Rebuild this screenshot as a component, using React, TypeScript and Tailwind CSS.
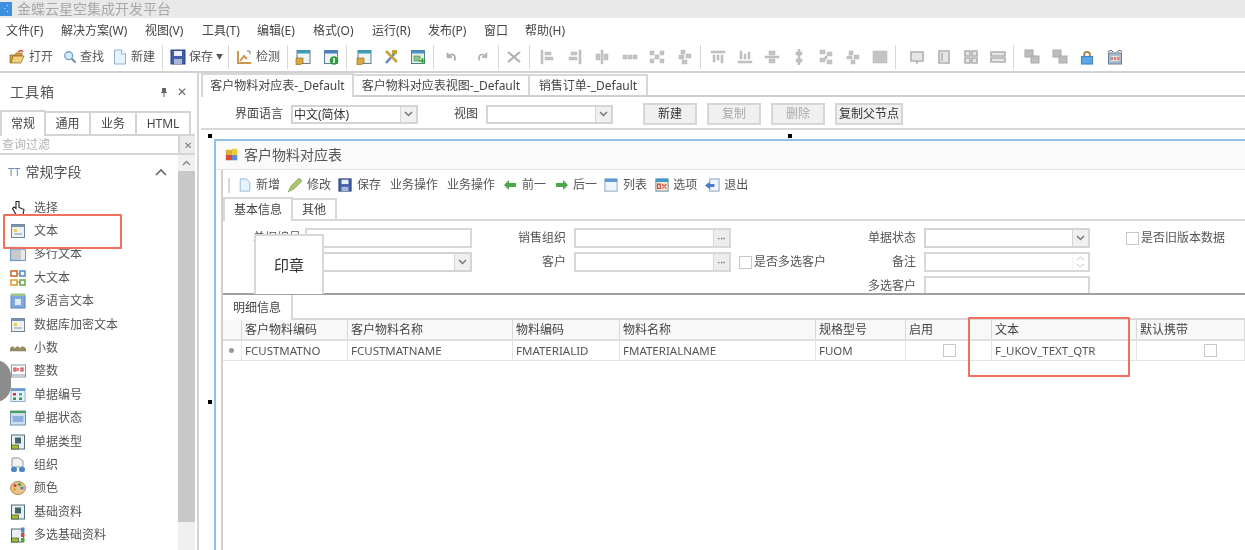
import type { ReactNode } from "react";

const menus = [
  { label: "文件(F)", w: "w-[55px]" },
  { label: "解决方案(W)", w: "w-[84px]" },
  { label: "视图(V)", w: "w-[57px]" },
  { label: "工具(T)", w: "w-[55px]" },
  { label: "编辑(E)", w: "w-[56px]" },
  { label: "格式(O)", w: "w-[59px]" },
  { label: "运行(R)", w: "w-[56px]" },
  { label: "发布(P)", w: "w-[56px]" },
  { label: "窗口", w: "w-[41px]" },
  { label: "帮助(H)", w: "w-[60px]" },
];

function Svg({ children, size = 16 }: { children: ReactNode; size?: number }) {
  return (
    <svg width={size} height={size} viewBox="0 0 16 16" className="shrink-0">
      {children}
    </svg>
  );
}

const FolderIcon = () => (
  <Svg>
    <path d="M1 6h5l1-2h6v3H4L2 14H1z" fill="#d9a441" stroke="#8a6420" strokeWidth=".7" />
    <path d="M4 7h11l-3 7H2z" fill="#f2cf7a" stroke="#8a6420" strokeWidth=".7" />
    <path d="M9 3c2-2 4-2 5 0" fill="none" stroke="#d8403a" strokeWidth="1.4" />
  </Svg>
);
const PageIcon = () => (
  <Svg>
    <path d="M2.5 1h7l4 4v10h-11z" fill="#e6f2fc" stroke="#8db4d6" />
    <path d="M9.5 1v4h4" fill="#fff" stroke="#8db4d6" />
  </Svg>
);
const SaveIcon = () => (
  <Svg>
    <rect x="1" y="1" width="14" height="14" fill="#3f5ea8" stroke="#2c4280" />
    <rect x="4" y="2" width="8" height="5" fill="#e8eefa" />
    <rect x="4" y="10" width="8" height="5" fill="#a9b6d6" />
  </Svg>
);
const CheckChart = () => (
  <Svg>
    <path d="M2 2v12h13" fill="none" stroke="#c9974d" strokeWidth="2" />
    <path d="M4 12l4-5 3 3" fill="none" stroke="#c9974d" strokeWidth="2" />
    <path d="M11 2h3v3" fill="none" stroke="#777" strokeWidth="1" />
  </Svg>
);
const WindowFlag = () => (
  <Svg>
    <rect x="2" y="1.5" width="13" height="13" fill="#eef3f7" stroke="#607f8f" />
    <rect x="2" y="1.5" width="13" height="3" fill="#3a9fb8" />
    <path d="M1 9h7v5l-3 2H1z" fill="#d8a93f" stroke="#7f6120" strokeWidth=".6" />
  </Svg>
);
const WindowInfo = () => (
  <Svg>
    <rect x="1.5" y="1.5" width="13" height="13" fill="#eef3f7" stroke="#607f8f" />
    <rect x="1.5" y="1.5" width="13" height="3" fill="#4a7fc4" />
    <circle cx="11" cy="11.5" r="4.3" fill="#2f9e3c" />
    <rect x="10.3" y="9" width="1.5" height="5" fill="#fff" />
  </Svg>
);
const ToolsIcon = () => (
  <Svg>
    <path d="M3 14L12 4" stroke="#5d86b0" strokeWidth="2.5" />
    <path d="M3 2l11 11" stroke="#c9a13c" strokeWidth="2.5" />
    <path d="M9 1h5v4H9z" fill="#c9a13c" />
  </Svg>
);
const WindowPlus = () => (
  <Svg>
    <rect x="1.5" y="1.5" width="13" height="13" fill="#e6f1e6" stroke="#4a7f86" />
    <rect x="1.5" y="1.5" width="13" height="3" fill="#4a90c4" />
    <rect x="4" y="7" width="6" height="5" fill="#8fc48f" stroke="#3d8a3d" strokeWidth=".6" />
    <path d="M12.5 9v6M9.5 12h6" stroke="#3da33d" strokeWidth="1.6" />
  </Svg>
);
const Undo = () => (
  <Svg size={14}>
    <path d="M3 3v5h5M3.5 7.5C7 3 13 5 11 12" fill="none" stroke="#a8a8a8" strokeWidth="2" />
  </Svg>
);
const Redo = () => (
  <Svg size={14}>
    <path d="M13 3v5H8M12.5 7.5C9 3 3 5 5 12" fill="none" stroke="#b4b4b4" strokeWidth="2" />
  </Svg>
);
const CutX = () => (
  <Svg>
    <path d="M2 3l12 10M14 3L2 13" stroke="#b0b0b0" strokeWidth="2.2" />
  </Svg>
);

const grayShapes = [
  "M2 1h2v14H2zM6 3h6v3H6zM6 8h8v3H6z",
  "M12 1h2v14h-2zM4 3h6v3H4zM2 8h8v3H2z",
  "M7 1h2v14H7zM2 5h4v6H2zM10 5h4v6h-4z",
  "M1 6h4v4H1zM6 6h4v4H6zM11 6h4v4h-4z",
  "M1 2h4v4H1zM11 2h4v4h-4zM6 6h4v4H6zM1 10h4v4H1zM11 10h4v4h-4z",
  "M4 1h4v4H4zM9 5h5v4H9zM2 6h5v4H2zM5 11h5v4H5z",
  "M1 2h14v2H1zM3 6h2v7H3zM7 6h2v5H7zM11 6h2v8h-2z",
  "M3 2h2v8H3zM7 5h2v5H7zM11 3h2v7h-2zM1 12h14v2H1z",
  "M1 7h14v2H1zM5 2h6v4H5zM5 10h6v4H5z",
  "M7 0h2v16H7zM5 3h6v3H5zM5 10h6v3H5z",
  "M2 1h5v4H2zM9 3h5v4H9zM2 9h5v4H2zM9 11h5v4H9zM7 7h2v3H7z",
  "M4 2h4v4H4zM9 6h5v4H9zM2 7h5v3H2zM6 11h4v4H6z",
  "M1 2h14v12H1z",
];
const GrayIcon = ({ i }: { i: number }) => (
  <Svg>
    <path d={grayShapes[i]} fill="#c4c4c4" stroke="#b4b4b4" strokeWidth=".5" />
  </Svg>
);
const Outline = ({ d }: { d: string }) => (
  <Svg>
    <path d={d} fill="#e6e6e6" stroke="#b0b0b0" strokeWidth="1.6" />
  </Svg>
);
const Stack = () => (
  <Svg>
    <rect x="1" y="1" width="8" height="7" fill="#bdbdbd" stroke="#aaa" />
    <rect x="7" y="7" width="8" height="7" fill="#bdbdbd" stroke="#aaa" />
  </Svg>
);
const Lock = () => (
  <Svg size={15}>
    <path d="M4.5 8V5a3 3 0 016 0v3" fill="none" stroke="#a5803f" strokeWidth="2" />
    <rect x="1.5" y="7" width="12" height="8" fill="#5aa6e6" stroke="#3b7db8" />
  </Svg>
);
const Clock = () => (
  <Svg>
    <rect x="1.5" y="4" width="13" height="11" fill="#a8bcd0" stroke="#6b7f92" />
    <path d="M1 3c2-2 4-2 5 0M10 3c2-2 4-2 5 0" fill="none" stroke="#444" strokeWidth="1" />
    <rect x="4" y="7" width="8" height="5" fill="#e8e0e0" />
    <path d="M5 8v3M8 8v3M11 8v3" stroke="#d33" strokeWidth="1.2" />
  </Svg>
);

const Sep = ({ className = "" }: { className?: string }) => (
  <span className={`mx-[7px] h-[24px] w-px shrink-0 bg-[#d6d6d6] ${className}`} />
);

const TextWin = () => (
  <Svg>
    <rect x="1.5" y="1.5" width="13" height="13" fill="#eef1f4" stroke="#6f8597" />
    <rect x="1.5" y="1.5" width="13" height="2.5" fill="#7b93a8" />
    <rect x="4" y="6" width="3" height="3" fill="#f0cc55" />
    <path d="M4 11h8" stroke="#8a9aa8" />
  </Svg>
);

const listIcons: ReactNode[] = [
  <Svg key="hand">
    <path d="M6 1.5v7L4 7 2.5 8.5 6 14.5h7l1-5-5-2V1.5z" fill="#fff" stroke="#222" strokeWidth="1.1" />
  </Svg>,
  <TextWin key="text" />,
  <Svg key="multi">
    <rect x="0.5" y="1.5" width="15" height="13" fill="#c9c9c9" stroke="#6c9bd0" strokeWidth="1.2" />
    <rect x="0.5" y="1.5" width="15" height="2.5" fill="#8eb4de" />
    <rect x="11" y="4" width="4" height="10" fill="#e8e8e8" />
  </Svg>,
  <Svg key="big">
    <rect x="1" y="1" width="6" height="5" fill="none" stroke="#d0692b" strokeWidth="1.6" />
    <rect x="1" y="10" width="6" height="5" fill="none" stroke="#e0a030" strokeWidth="1.6" />
    <rect x="10" y="1" width="5" height="5" fill="none" stroke="#5a8ec4" strokeWidth="1.6" />
    <rect x="10" y="10" width="5" height="5" fill="none" stroke="#6aa84f" strokeWidth="1.6" />
    <path d="M7 4h3M7 12h3" stroke="#888" />
  </Svg>,
  <Svg key="lang">
    <rect x="1" y="2" width="14" height="13" fill="#7fa8dc" stroke="#5b85ba" />
    <rect x="1" y="0.5" width="14" height="2.5" fill="#9dc58a" />
    <rect x="5" y="6" width="6" height="6" fill="#dfeafa" />
  </Svg>,
  <TextWin key="db" />,
  <Svg key="dec">
    <path d="M0 9c1-3 4-3 5 0 1-3 4-3 5 0 1-3 4-3 6 0v2H0z" fill="#9c8c5a" stroke="#777" strokeWidth=".5" />
  </Svg>,
  <Svg key="int">
    <rect x="1.5" y="2" width="14" height="12" fill="#fff" stroke="#8899aa" />
    <path d="M4 5h2v3H4zM8 5v3M11 5h2v3h-2z" fill="none" stroke="#c93a3a" strokeWidth="1.2" />
    <path d="M2 12h13" stroke="#8899aa" />
  </Svg>,
  <Svg key="no">
    <rect x="1" y="1.5" width="14" height="13" fill="#e6effa" stroke="#8eb0d6" />
    <rect x="1" y="1.5" width="14" height="2.5" fill="#6c9bd0" />
    <rect x="3" y="6" width="3" height="2.5" fill="#d33" />
    <rect x="9" y="6" width="3" height="2.5" fill="#3b8" />
    <rect x="3" y="10.5" width="3" height="2.5" fill="#3a9c3a" />
    <rect x="9" y="10.5" width="3" height="2.5" fill="#3a9c3a" />
  </Svg>,
  <Svg key="status">
    <rect x="0.5" y="1" width="15" height="14" fill="#cfdff2" stroke="#7b93a8" />
    <rect x="0.5" y="1" width="15" height="2" fill="#3ea25a" />
    <rect x="2.5" y="6" width="11" height="6" fill="#8eb0de" />
  </Svg>,
  <Svg key="type">
    <rect x="1.5" y="1" width="13" height="14" fill="#e8eef2" stroke="#50707f" />
    <rect x="5" y="3.5" width="6" height="6" fill="#466" />
    <rect x="1.5" y="11" width="7" height="4" fill="#9ec22e" stroke="#333" strokeWidth=".6" />
  </Svg>,
  <Svg key="org">
    <path d="M2 1h7l4 3v6H2z" fill="#f2f2f2" stroke="#8a9aa8" />
    <rect x="1" y="10" width="6" height="5" rx="2" fill="#4a86c8" />
    <rect x="9" y="10" width="6" height="5" rx="2" fill="#4a86c8" />
  </Svg>,
  <Svg key="color">
    <ellipse cx="8" cy="8" rx="7.5" ry="6.5" fill="#e8c48a" stroke="#b08a50" />
    <circle cx="5" cy="5.5" r="1.6" fill="#d83a3a" />
    <circle cx="9.5" cy="4.5" r="1.6" fill="#3b9c3b" />
    <circle cx="12" cy="8" r="1.6" fill="#3b7bd8" />
    <circle cx="4.5" cy="9.5" r="1.6" fill="#e8a030" />
  </Svg>,
  <Svg key="base">
    <rect x="1.5" y="1" width="13" height="14" fill="#e8eef2" stroke="#50707f" />
    <rect x="5" y="3.5" width="6" height="6" fill="#466" />
    <rect x="1.5" y="11" width="7" height="4" fill="#9ec22e" stroke="#333" strokeWidth=".6" />
  </Svg>,
  <Svg key="mbase">
    <rect x="1.5" y="2" width="12" height="13" fill="#e8eef2" stroke="#50707f" />
    <rect x="1.5" y="11" width="7" height="4" fill="#9ec22e" stroke="#333" strokeWidth=".6" />
    <rect x="11" y="0.5" width="3.5" height="5" fill="#5b85d0" />
    <rect x="11" y="6" width="3.5" height="4" fill="#d04a4a" />
    <rect x="11" y="11" width="3.5" height="4" fill="#4aa04a" />
  </Svg>,
];

const fields = [
  "选择",
  "文本",
  "多行文本",
  "大文本",
  "多语言文本",
  "数据库加密文本",
  "小数",
  "整数",
  "单据编号",
  "单据状态",
  "单据类型",
  "组织",
  "颜色",
  "基础资料",
  "多选基础资料",
];

const Box = ({ className = "" }: { className?: string }) => (
  <span className={`block h-[13px] w-[13px] shrink-0 border border-[#c8c8c8] bg-white ${className}`} />
);

const Chevron = () => (
  <svg width="9" height="6" viewBox="0 0 9 6">
    <path d="M1 1l3.5 3.5L8 1" fill="none" stroke="#777" strokeWidth="1.5" />
  </svg>
);

function Select({ text, className }: { text?: string; className: string }) {
  return (
    <div className={`flex h-[19px] border-2 border-[#d4d4d4] bg-white ${className}`}>
      <span className="flex-1 pl-[1px] text-[12px] leading-[15px] text-[#333]">{text}</span>
      <span className="flex w-[16px] items-center justify-center border-l border-[#d4d4d4] bg-[#f0f0f0]">
        <Chevron />
      </span>
    </div>
  );
}

const Input = ({ className = "" }: { className?: string }) => (
  <div className={`h-[20px] border-2 border-[#d8d8d8] bg-white ${className}`} />
);

const Lookup = () => (
  <div className="flex h-[20px] w-full border-2 border-[#d8d8d8] bg-white">
    <span className="flex-1" />
    <span className="flex w-[16px] items-center justify-center border-l border-[#d8d8d8] bg-[#ececec] text-[10px] leading-none text-[#555]">
      ···
    </span>
  </div>
);

const Btn = ({ label, w, off }: { label: string; w: string; off?: boolean }) => (
  <span
    className={`flex h-[22px] items-center justify-center border-2 border-[#d6d6d6] bg-[#f0f0f0] text-[12px] ${w} ${
      off ? "text-[#aaa]" : "text-[#333]"
    }`}
  >
    {label}
  </span>
);

const Handle = ({ className }: { className: string }) => (
  <span className={`absolute h-[4px] w-[4px] bg-black ${className}`} />
);

const cols = "grid-cols-[19px_106px_165px_107px_196px_90px_86px_145px_1fr]";
const headers = ["", "客户物料编码", "客户物料名称", "物料编码", "物料名称", "规格型号", "启用", "文本", "默认携带"];
const cells = ["", "FCUSTMATNO", "FCUSTMATNAME", "FMATERIALID", "FMATERIALNAME", "FUOM", "", "F_UKOV_TEXT_QTR", ""];

export default function App() {
  return (
    <div
      className="relative h-[550px] w-[1245px] overflow-hidden bg-white text-[12px] text-[#444] blur-[0.5px]"
      style={{ fontFamily: '"Noto Sans", "Noto Sans CJK SC", sans-serif' }}
    >
      {/* title bar */}
      <div className="flex h-[18px] items-center bg-[#e9e9e9]">
        <span className="flex h-[14px] w-[12px] items-center justify-center bg-[#3d8fe0] text-[8px] leading-none text-white">
          ⁖
        </span>
        <span className="ml-[5px] text-[14px] leading-none text-[#a8a8a8]">金蝶云星空集成开发平台</span>
      </div>

      {/* menu */}
      <div className="flex h-[22px] items-center pl-[6px] pt-[3px]">
        {menus.map((m) => (
          <span key={m.label} className={`${m.w} text-[12px] leading-none text-[#444]`}>
            {m.label}
          </span>
        ))}
      </div>

      {/* main toolbar */}
      <div className="flex h-[33px] items-center whitespace-nowrap border-b-2 border-[#d2d2d2] pl-[9px] pt-[3px] text-[12px] text-[#555]">
        <FolderIcon />
        <span className="ml-[4px] mr-[10px]">打开</span>
        <Svg size={14}>
          <circle cx="6.5" cy="6.5" r="4.5" fill="#d6ecfa" stroke="#6da3c9" strokeWidth="1.5" />
          <path d="M10 10l4.5 4.5" stroke="#6f87a0" strokeWidth="2.2" />
        </Svg>
        <span className="ml-[3px] mr-[8px]">查找</span>
        <PageIcon />
        <span className="ml-[3px]">新建</span>
        <Sep />
        <SaveIcon />
        <span className="ml-[3px]">保存</span>
        <span className="-mr-[2px] ml-[3px] text-[7px]">▼</span>
        <Sep />
        <CheckChart />
        <span className="ml-[4px]">检测</span>
        <Sep />
        <WindowFlag />
        <span className="ml-[12px]" />
        <WindowInfo />
        <Sep className="mr-[9px]" />
        <span className="flex items-center gap-[11px]">
          <WindowFlag />
          <ToolsIcon />
          <WindowPlus />
        </span>
        <Sep className="mr-[11px]" />
        <span className="flex items-center gap-[16px] pr-[2px]">
          <Undo />
          <Redo />
        </span>
        <Sep />
        <CutX />
        <Sep className="mr-[9px]" />
        <span className="flex items-center gap-[11.5px]">
          {[0, 1, 2, 3, 4, 5].map((i) => (
            <GrayIcon key={i} i={i} />
          ))}
        </span>
        <Sep className="mr-[9px]" />
        <span className="flex items-center gap-[11px]">
          {[6, 7, 8, 9, 10, 11, 12].map((i) => (
            <GrayIcon key={i} i={i} />
          ))}
        </span>
        <Sep className="mr-[13px]" />
        <span className="flex items-center gap-[11px]">
          <Outline d="M2 3h12v9H9l-1 2-1-2H2z" />
          <Outline d="M3 2h10v12H3zM6 4v8" />
          <Outline d="M2 2h5v5H2zM9 2h5v5H9zM2 9h5v5H2zM9 9h5v5H9z" />
          <Outline d="M1 3h14v4H1zM1 9h14v4H1z" />
        </span>
        <Sep className="mr-[10px]" />
        <span className="flex items-center gap-[12px]">
          <Stack />
          <Stack />
          <Lock />
          <Clock />
        </span>
      </div>

      <div className="flex h-[477px]">
        {/* toolbox */}
        <aside className="flex w-[199px] shrink-0 flex-col border-r-2 border-[#d4d4d4] pr-[2px]">
          <div className="flex h-[37px] items-center justify-between pl-[10px] pr-[8px]">
            <span className="text-[14px] leading-none tracking-[1px] text-[#555]">工具箱</span>
            <span className="flex items-center gap-[9px] text-[12px] leading-none text-[#666]">
              <svg width="8" height="10" viewBox="0 0 8 10">
                <path d="M2 1h4v4h1v1H1V5h1zM3.5 6h1v4h-1z" fill="#666" />
              </svg>
              <span>✕</span>
            </span>
          </div>
          <div className="flex h-[26px] items-end border-b-2 border-[#d4d4d4] pr-[4px] text-[12px]">
            <span className="z-10 -mb-[2px] flex h-[26px] w-[46px] items-center justify-center border-2 border-b-0 border-[#d4d4d4] bg-white">
              常规
            </span>
            <span className="flex h-[23px] w-[45px] items-center justify-center border-2 border-b-0 border-l-0 border-[#d4d4d4]">
              通用
            </span>
            <span className="flex h-[23px] w-[46px] items-center justify-center border-2 border-b-0 border-l-0 border-[#d4d4d4]">
              业务
            </span>
            <span className="flex h-[23px] flex-1 items-center justify-center border-2 border-b-0 border-l-0 border-[#d4d4d4]">
              HTML
            </span>
          </div>
          <div className="flex h-[19px] border-b-2 border-[#d4d4d4]">
            <span className="flex-1 pl-[2px] text-[12px] leading-[17px] text-[#b4b4b4]">查询过滤</span>
            <span className="flex w-[17px] items-center justify-center border-l-2 border-[#d4d4d4] bg-[#ececec] text-[10px] leading-none text-[#777]">
              ✕
            </span>
          </div>
          <div className="flex min-h-0 flex-1">
            <div className="min-w-0 flex-1">
              <div className="flex h-[33px] items-center pl-[8px] pr-[11px]">
                <span className="mr-[5px] text-[11px] leading-none text-[#6f8fb8]">TT</span>
                <span className="text-[14px] leading-none text-[#555]">常规字段</span>
                <span className="ml-auto">
                  <svg width="12" height="8" viewBox="0 0 12 8">
                    <path d="M1 7l5-5 5 5" fill="none" stroke="#666" strokeWidth="1.6" />
                  </svg>
                </span>
              </div>
              <ul className="pt-[8px]">
                {fields.map((f, i) => (
                  <li key={f} className="flex h-[23.4px] items-center pl-[10px]">
                    {listIcons[i]}
                    <span className="ml-[8px] text-[12px] leading-none text-[#555]">{f}</span>
                  </li>
                ))}
              </ul>
            </div>
            <div className="flex w-[17px] shrink-0 flex-col bg-[#f0f0f0]">
              <span className="flex h-[16px] shrink-0 items-center justify-center">
                <svg width="9" height="6" viewBox="0 0 9 6">
                  <path d="M1 5l3.5-3.5L8 5" fill="none" stroke="#888" strokeWidth="1.5" />
                </svg>
              </span>
              <span className="h-[351px] shrink-0 bg-[#c8c8c8]" />
            </div>
          </div>
        </aside>

        {/* designer */}
        <main className="flex min-w-0 flex-1 flex-col pl-[2px]">
          <div className="flex h-[24px] items-end border-b-2 border-[#cfcfcf] text-[12px] text-[#444]">
            <span className="z-10 -mb-[2px] flex h-[24px] w-[153px] items-center justify-center border-2 border-b-0 border-[#d8d8d8] bg-white">
              客户物料对应表-_Default
            </span>
            <span className="flex h-[21px] w-[176px] items-center justify-center border-r-2 border-t-2 border-[#d8d8d8]">
              客户物料对应表视图-_Default
            </span>
            <span className="flex h-[21px] w-[118px] items-center justify-center border-r-2 border-t-2 border-[#d8d8d8]">
              销售订单-_Default
            </span>
          </div>

          <div className="flex h-[33px] items-center border-b-2 border-[#d8d8d8] pt-[3px] text-[12px]">
            <span className="ml-[34px] w-[56px]">界面语言</span>
            <Select text="中文(简体)" className="w-[127px]" />
            <span className="ml-[36px] w-[32px]">视图</span>
            <Select className="w-[127px]" />
            <span className="ml-[30px] flex items-center gap-[10px]">
              <Btn label="新建" w="w-[54px]" />
              <Btn label="复制" w="w-[54px]" off />
              <Btn label="删除" w="w-[54px]" off />
              <Btn label="复制父节点" w="w-[68px]" />
            </span>
          </div>

          <div className="min-h-0 flex-1 pl-[13px] pt-[9px]">
            <div className="h-full border-l-2 border-t-2 border-[#8fc0e6]">
              <div className="flex h-[29px] items-center border-b border-[#e4e4e4] bg-[#fafafa] pl-[9px]">
                <Svg size={14}>
                  <rect x="1" y="2" width="7" height="6" fill="#d8b040" />
                  <rect x="8" y="1" width="6" height="7" fill="#f0c83c" />
                  <rect x="1" y="8" width="7" height="6" fill="#d84a3a" />
                  <rect x="8" y="8" width="6" height="6" fill="#5a8ed0" />
                </Svg>
                <span className="ml-[5px] text-[14px] leading-none text-[#555]">客户物料对应表</span>
              </div>
              <div className="ml-[5px] h-full border-l-2 border-[#d0d0d0]">
                {/* form toolbar */}
                <div className="flex h-[28px] items-center whitespace-nowrap pl-[5px] pt-[2px] text-[12px] text-[#555]">
                  <span className="mr-[8px] h-[15px] w-[2px] bg-[#d8d8d8]" />
                  <Svg size={14}>
                    <path d="M2.5 1h7l4 4v10h-11z" fill="#e6f2fc" stroke="#8db4d6" />
                  </Svg>
                  <span className="ml-[4px] mr-[7px]">新增</span>
                  <Svg>
                    <path d="M1 15l3-6 8-8 3 3-8 8z" fill="#a8c86a" stroke="#7f8f50" strokeWidth=".6" />
                  </Svg>
                  <span className="ml-[4px] mr-[7px]">修改</span>
                  <Svg size={14}>
                    <rect x="1" y="1" width="14" height="14" fill="#3f5ea8" stroke="#2c4280" />
                    <rect x="4" y="2" width="8" height="5" fill="#e8eefa" />
                    <rect x="4" y="10" width="8" height="5" fill="#a9b6d6" />
                  </Svg>
                  <span className="ml-[5px] mr-[9px]">保存</span>
                  <span className="mr-[9px]">业务操作</span>
                  <span className="mr-[9px]">业务操作</span>
                  <svg width="12" height="10" viewBox="0 0 12 10" className="shrink-0">
                    <path d="M0 5l5-5v3h7v4H5v3z" fill="#4aa84a" />
                  </svg>
                  <span className="ml-[6px] mr-[10px]">前一</span>
                  <svg width="12" height="10" viewBox="0 0 12 10" className="shrink-0">
                    <path d="M12 5L7 0v3H0v4h7v3z" fill="#4aa84a" />
                  </svg>
                  <span className="ml-[5px] mr-[7px]">后一</span>
                  <Svg size={14}>
                    <rect x="1" y="1" width="14" height="14" fill="#eef4fa" stroke="#7fa0c0" />
                    <rect x="1" y="1" width="14" height="3.5" fill="#5a9ad8" />
                  </Svg>
                  <span className="ml-[5px] mr-[8px]">列表</span>
                  <Svg size={14}>
                    <rect x="1" y="1" width="14" height="14" fill="#f0e8c8" stroke="#6080a0" />
                    <rect x="1" y="1" width="14" height="3.5" fill="#3a9ac8" />
                    <path d="M3 7h3v5H3zM8 7l5 5M13 7l-5 5" fill="none" stroke="#c83a3a" strokeWidth="1.2" />
                  </Svg>
                  <span className="ml-[4px] mr-[8px]">选项</span>
                  <Svg size={15}>
                    <rect x="5" y="1" width="10" height="13" fill="#eef4fa" stroke="#7fa0c0" />
                    <path d="M0 8l5-4v2.5h5v3H5V12z" fill="#4a7ac8" />
                  </Svg>
                  <span className="ml-[4px]">退出</span>
                </div>

                {/* form tabs */}
                <div className="flex h-[23px] items-end border-b-2 border-[#d8d8d8] text-[12px]">
                  <span className="z-10 -mb-[2px] flex h-[24px] w-[70px] items-center justify-center border-2 border-b-0 border-[#d8d8d8] bg-white">
                    基本信息
                  </span>
                  <span className="flex h-[21px] w-[44px] items-center justify-center border-r-2 border-t-2 border-[#d8d8d8]">
                    其他
                  </span>
                </div>

                <div className="grid h-[74px] grid-cols-[82px_167px_102px_157px_193px_166px_1fr] auto-rows-[24px] overflow-hidden border-b-2 border-[#a0a0a0] pt-[7px] text-[12px] text-[#555]">
                  <span className="pr-[4px] text-right leading-[20px]">单据编号</span>
                  <Input />
                  <span className="pr-[8px] text-right leading-[20px]">销售组织</span>
                  <Lookup />
                  <span className="pr-[8px] text-right leading-[20px]">单据状态</span>
                  <Select className="h-[20px] w-full" />
                  <span className="flex h-[20px] items-center gap-[2px] pl-[36px]">
                    <Box />
                    是否旧版本数据
                  </span>

                  <span />
                  <Select className="h-[20px] w-full" />
                  <span className="pr-[8px] text-right leading-[20px]">客户</span>
                  <Lookup />
                  <span className="flex h-[20px] items-center justify-between pl-[8px] pr-[8px]">
                    <span className="flex items-center gap-[2px]">
                      <Box />
                      是否多选客户
                    </span>
                    <span>备注</span>
                  </span>
                  <div className="flex h-[20px] border-2 border-[#d8d8d8]">
                    <span className="flex-1" />
                    <span className="flex w-[16px] flex-col items-center justify-center gap-[2px] border-l border-[#e8e8e8] opacity-50">
                      <svg width="9" height="5" viewBox="0 0 9 5">
                        <path d="M1 4l3.5-3L8 4" fill="none" stroke="#888" />
                      </svg>
                      <svg width="9" height="5" viewBox="0 0 9 5">
                        <path d="M1 1l3.5 3L8 1" fill="none" stroke="#888" />
                      </svg>
                    </span>
                  </div>
                  <span />

                  <span />
                  <span />
                  <span />
                  <span />
                  <span className="pr-[8px] text-right leading-[20px]">多选客户</span>
                  <Input />
                  <span />
                </div>

                {/* detail */}
                <div className="flex h-[25px] items-end border-b-2 border-[#d8d8d8] text-[12px]">
                  <span className="z-10 -mb-[2px] flex h-[25px] w-[70px] items-center justify-center border-r-2 border-[#d8d8d8] bg-white">
                    明细信息
                  </span>
                </div>
                <div className={`grid h-[21px] ${cols} border-b-2 border-[#e0e0e0] bg-[#f8f8f8] text-[12px] text-[#444]`}>
                  {headers.map((h, i) => (
                    <span key={i} className="truncate border-r border-[#d8d8d8] pl-[3px] leading-[19px]">
                      {h}
                    </span>
                  ))}
                </div>
                <div className={`grid h-[20px] ${cols} border-b border-[#e4e4e4] text-[11.5px] text-[#555]`}>
                  {cells.map((c, i) => (
                    <span
                      key={i}
                      className="flex items-center overflow-hidden whitespace-nowrap border-r border-[#e4e4e4] pl-[3px]"
                    >
                      {i === 0 && <span className="ml-[3px] h-[5px] w-[5px] rounded-full bg-[#999]" />}
                      {i === 6 && <Box className="ml-[34px]" />}
                      {i === 8 && <Box className="ml-[64px]" />}
                      {c}
                    </span>
                  ))}
                </div>
              </div>
            </div>
          </div>
        </main>
      </div>

      {/* overlays */}
      <Handle className="left-[208px] top-[134px]" />
      <Handle className="left-[788px] top-[134px]" />
      <Handle className="left-[208px] top-[400px]" />
      <div className="absolute left-[254px] top-[234px] flex h-[60px] w-[70px] items-center justify-center border-2 border-b-0 border-[#d8d8d8] bg-white text-[15px] text-[#333]">
        印章
      </div>
      <div className="absolute left-[3px] top-[214px] h-[35px] w-[119px] rounded-[1px] border-2 border-[#f0705f]" />
      <div className="absolute left-[968px] top-[317px] h-[60px] w-[162px] rounded-[1px] border-2 border-[#f0705f]" />
      <div className="absolute -left-[21px] top-[360px] h-[42px] w-[32px] rounded-full bg-[#8c8c8c]" />
    </div>
  );
}
